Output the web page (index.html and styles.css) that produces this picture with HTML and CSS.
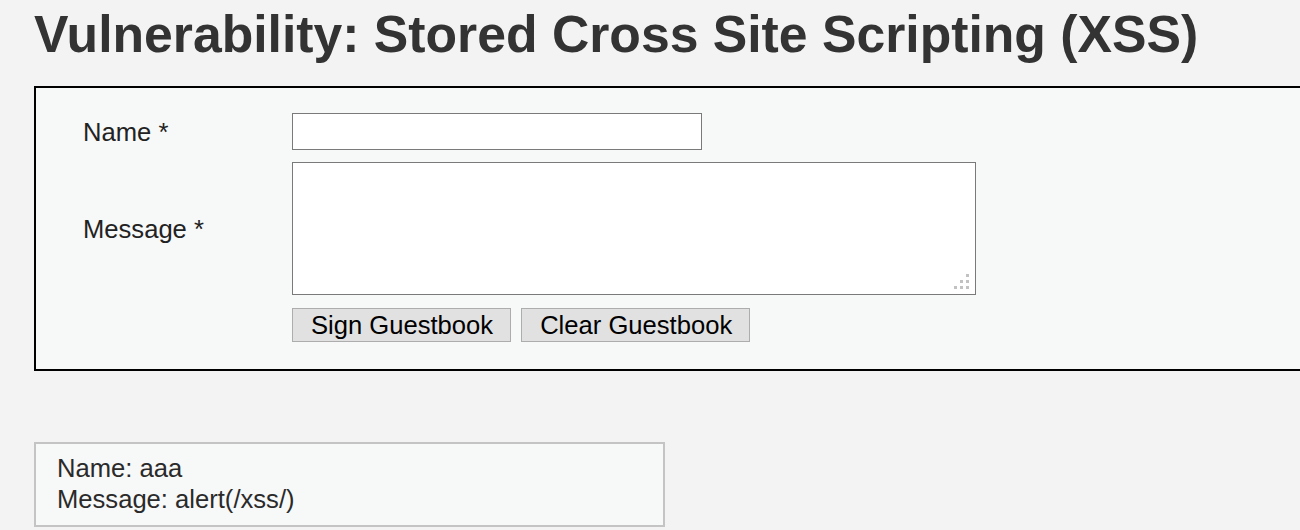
FILE: index.html
```html
<!DOCTYPE html>
<html>
<head>
<meta charset="utf-8">
<link rel="stylesheet" href="styles.css">
</head>
<body>
<div class="page">
  <h1 class="title">Vulnerability: Stored Cross Site Scripting (XSS)</h1>
  <div class="vulnerable-code">
    <form class="guest-form" name="guestform">
      <label class="field-label" for="txtName">Name *</label>
      <input class="name-input" id="txtName" type="text" name="txtName">
      <label class="field-label" for="mtxMessage">Message *</label>
      <div class="textarea-wrap">
        <textarea class="message-input" id="mtxMessage" name="mtxMessage"></textarea>
        <svg class="grip" width="15" height="15" viewBox="0 0 15 15" aria-hidden="true">
          <rect x="12" y="0" width="3" height="3" fill="#c2c2c2"/>
          <rect x="6" y="6" width="3" height="3" fill="#c2c2c2"/>
          <rect x="12" y="6" width="3" height="3" fill="#c2c2c2"/>
          <rect x="0" y="12" width="3" height="3" fill="#c2c2c2"/>
          <rect x="6" y="12" width="3" height="3" fill="#c2c2c2"/>
          <rect x="12" y="12" width="3" height="3" fill="#c2c2c2"/>
        </svg>
      </div>
      <span class="spacer"></span>
      <div class="button-row">
        <button class="btn" type="button">Sign Guestbook</button>
        <button class="btn" type="button">Clear Guestbook</button>
      </div>
    </form>
  </div>
  <div class="guestbook-comments">
    <div>Name: aaa</div>
    <div>Message: alert(/xss/)</div>
  </div>
</div>
</body>
</html>
```

FILE: styles.css
```css
html, body {
  margin: 0;
  padding: 0;
  overflow: hidden;
  background: #f3f3f3;
}

body {
  font-family: "Liberation Sans", Arial, sans-serif;
  font-size: 25.6px;
  color: #222;
}

.page {
  padding-left: 34px;
  width: 1400px;
}

.title {
  margin: 8px 0 26px 0;
  font-size: 51.7px;
  line-height: 52px;
  font-weight: bold;
  color: #333;
}

.vulnerable-code {
  width: 1320px;
  border: 2px solid #000;
  background: #f7f8f8;
  padding: 25px 0 27px 47px;
}

.guest-form {
  display: grid;
  grid-template-columns: 209px auto;
  row-gap: 12px;
  align-items: center;
}

.field-label {
  color: #222;
  line-height: 30px;
}

.name-input {
  box-sizing: border-box;
  width: 410px;
  height: 37px;
  margin: 0;
  border: 1px solid #7a7a7a;
  background: #fff;
  font-family: inherit;
  font-size: 22px;
  padding: 2px 4px;
}

.textarea-wrap {
  position: relative;
  width: 684px;
  height: 133px;
}

.message-input {
  box-sizing: border-box;
  display: block;
  width: 684px;
  height: 133px;
  margin: 0;
  border: 1px solid #7a7a7a;
  background: #fff;
  resize: none;
  font-family: inherit;
  font-size: 22px;
}

.grip {
  position: absolute;
  right: 7px;
  bottom: 6px;
}

.button-row {
  display: flex;
  gap: 10px;
  margin-top: 1px;
}

.btn {
  box-sizing: border-box;
  height: 34px;
  margin: 0;
  padding: 0 17px 0 18px;
  border: 1px solid #adadad;
  background: #e1e1e1;
  color: #000;
  font-family: "Liberation Sans", Arial, sans-serif;
  font-size: 25.6px;
  line-height: 32px;
  border-radius: 0;
}

.guestbook-comments {
  box-sizing: border-box;
  width: 631px;
  margin-top: 71px;
  border: 2px solid #c4c4c4;
  background: #f7f8f8;
  padding: 9px 21px 10px 21px;
  line-height: 31px;
  color: #2a2a2a;
}
```
